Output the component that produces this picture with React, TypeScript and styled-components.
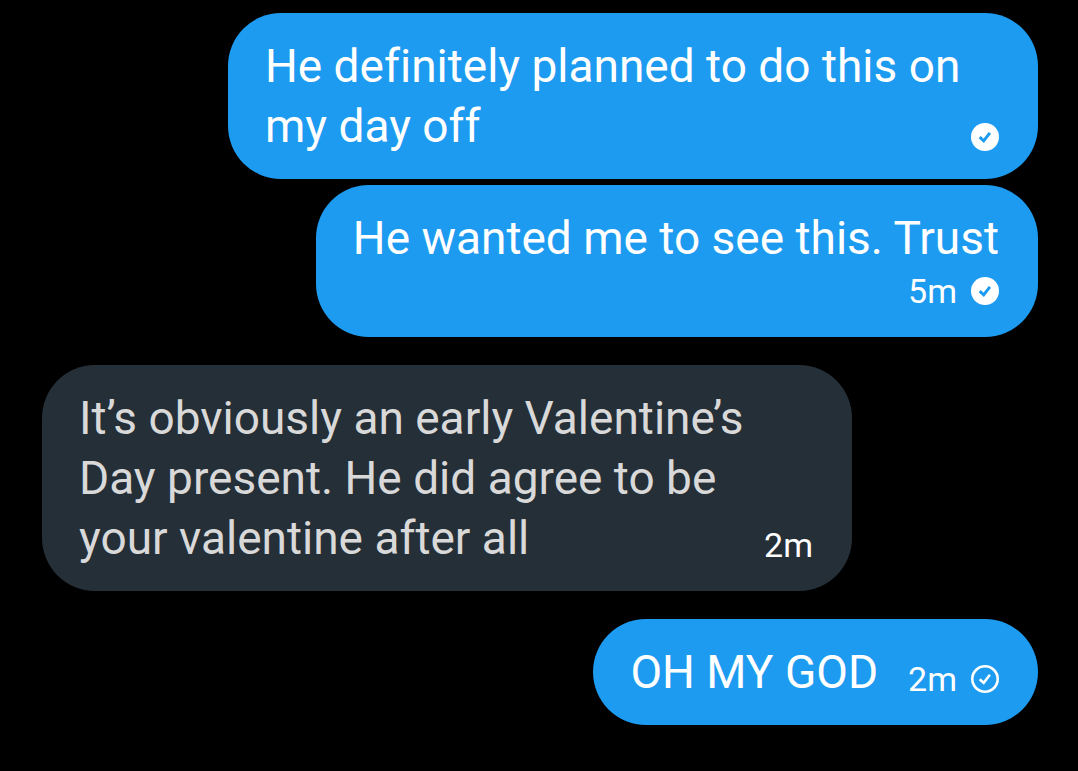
import React from "react";
import styled, { createGlobalStyle } from "styled-components";

const Global = createGlobalStyle`
  * { box-sizing: border-box; }
  html, body { margin: 0; background: #000; }
  body {
    font-family: Roboto, "Liberation Sans", sans-serif;
    font-variant-ligatures: none;
  }
`;

const Thread = styled.main`
  display: flex;
  flex-direction: column;
  padding: 13px 40px 46px 42px;
`;

const Bubble = styled.article<{ $mine?: boolean; $stacked?: boolean; $gap?: number; $wide?: boolean }>`
  display: flex;
  flex-direction: ${(p) => (p.$stacked ? "column" : "row")};
  align-items: flex-end;
  justify-content: space-between;
  align-self: ${(p) => (p.$mine ? "flex-end" : "flex-start")};
  column-gap: ${(p) => (p.$wide ? 0 : 30)}px;
  width: ${(p) => (p.$wide ? "810px" : "auto")};
  max-width: 100%;
  margin-top: ${(p) => p.$gap ?? 0}px;
  padding: 23px 39px 23px 37px;
  border-radius: 53px;
  background: ${(p) => (p.$mine ? "#1d9bf0" : "#252f37")};
  color: ${(p) => (p.$mine ? "#fff" : "#d9d9d9")};
`;

const Text = styled.p`
  margin: 0;
  font-size: 46px;
  line-height: 60px;
`;

const Meta = styled.footer<{ $bare?: boolean }>`
  display: flex;
  align-items: center;
  gap: 14px;
  height: ${(p) => (p.$bare ? 38 : 46)}px;
  color: #fff;
  font-size: 34px;
  line-height: 46px;
  white-space: nowrap;
`;

const Icon = styled.svg`
  display: block;
  width: 28px;
  height: 28px;
`;

const Status = ({ seen }: { seen?: boolean }) => (
  <Icon viewBox="0 0 28 28" role="img" aria-label={seen ? "Seen" : "Sent"}>
    <circle cx="14" cy="14" r={seen ? 14 : 12.7} fill={seen ? "#fff" : "none"} stroke={seen ? "none" : "#fff"} strokeWidth="2.6" />
    <path d="M8.7 14.2l4 3.7 6.2-8.1" fill="none" stroke={seen ? "#1d9bf0" : "#fff"} strokeWidth={seen ? 3 : 2.6} />
  </Icon>
);

export default function App() {
  return (
    <>
      <Global />
      <Thread>
        <Bubble $mine $wide>
          <Text>He definitely planned to do this on<br />my day off</Text>
          <Meta $bare><Status seen /></Meta>
        </Bubble>
        <Bubble $mine $stacked $gap={6}>
          <Text>He wanted me to see this. Trust</Text>
          <Meta><time>5m</time><Status seen /></Meta>
        </Bubble>
        <Bubble $wide $gap={28}>
          <Text>It’s obviously an early Valentine’s<br />Day present. He did agree to be<br />your valentine after all</Text>
          <Meta><time>2m</time></Meta>
        </Bubble>
        <Bubble $mine $gap={28}>
          <Text>OH MY GOD</Text>
          <Meta><time>2m</time><Status /></Meta>
        </Bubble>
      </Thread>
    </>
  );
}
